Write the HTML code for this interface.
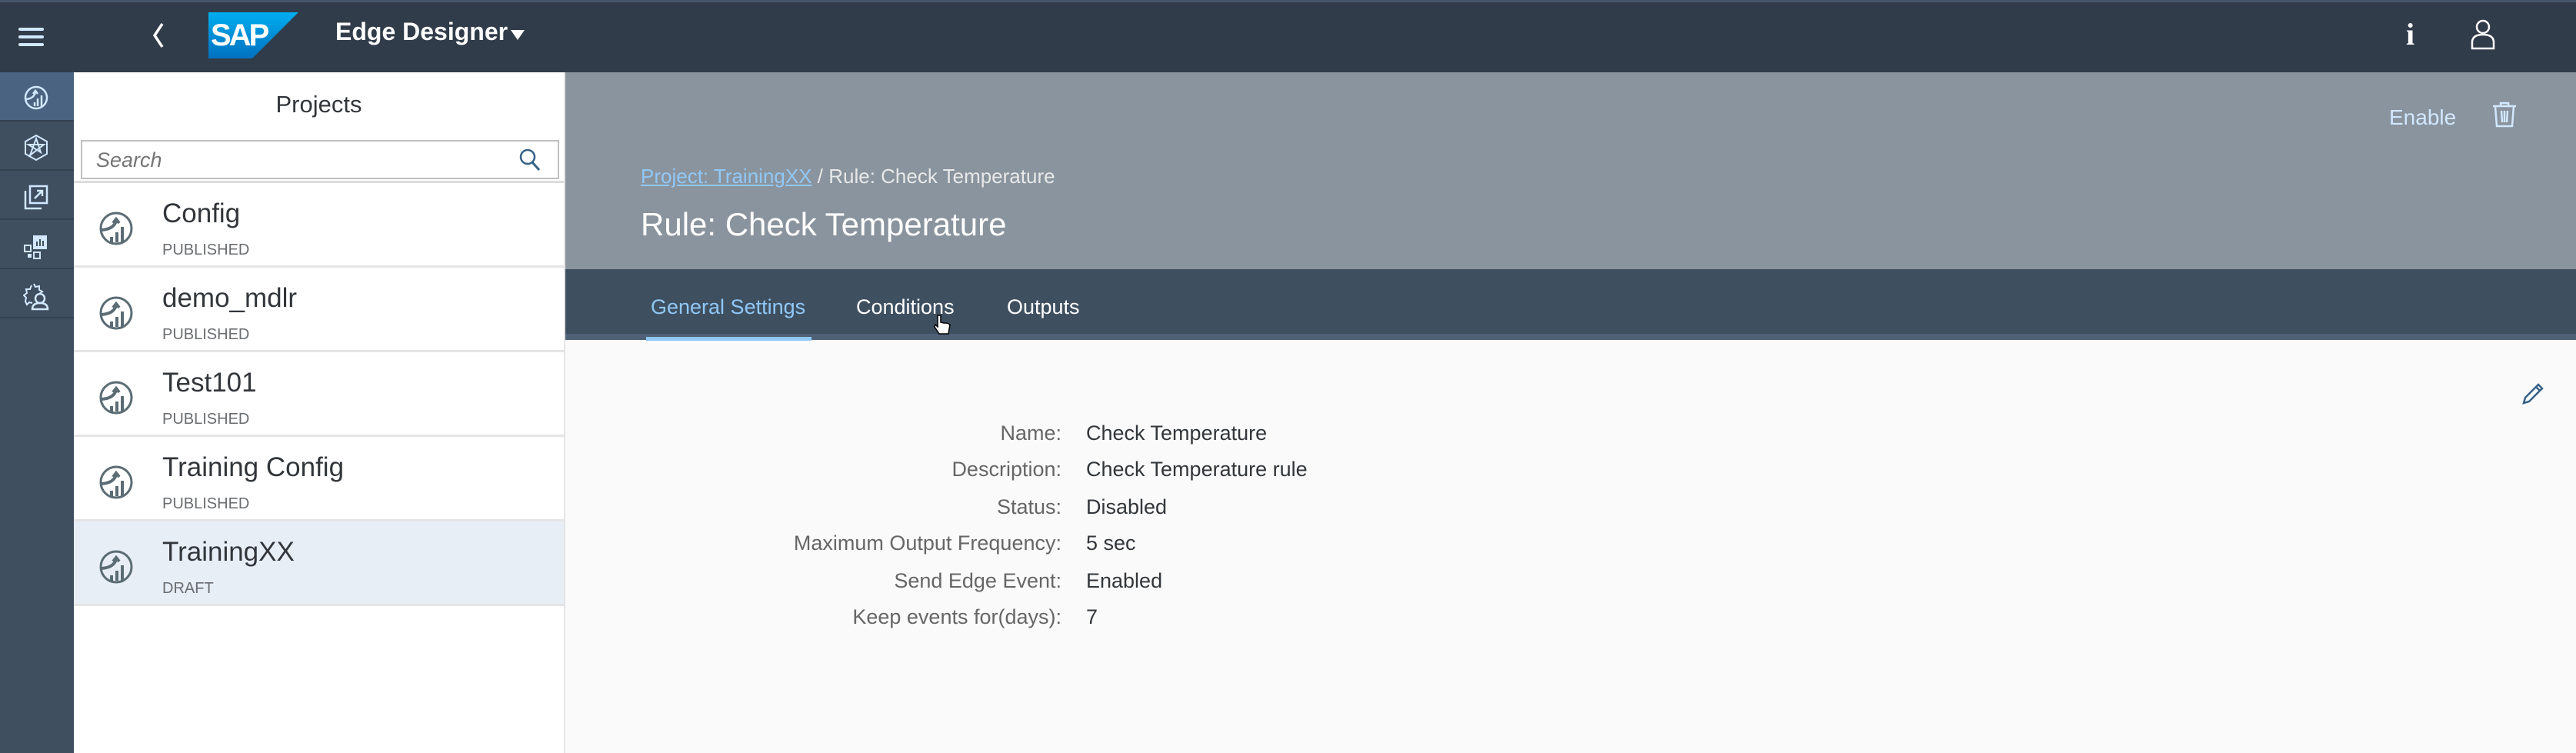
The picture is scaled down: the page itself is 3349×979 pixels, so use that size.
<!DOCTYPE html>
<html><head><meta charset="utf-8"><style>
*{margin:0;padding:0;box-sizing:border-box}
body{width:3349px;height:979px;overflow:hidden;font-family:"Liberation Sans",sans-serif;background:#fafafa;position:relative}
.abs{position:absolute}
#hdr{left:0;top:0;width:3349px;height:94px;background:#313c4a;border-top:3px solid #46566a}
#side{left:0;top:94px;width:96px;height:885px;background:#3f4f60}
.si{position:absolute;left:0;width:96px;height:64px;border-bottom:2px solid #34414f}
#panel{left:96px;top:94px;width:639px;height:885px;background:#fff;border-right:2px solid #e5e5e5}
.item{position:absolute;left:0;width:637px;height:110px;border-bottom:3px solid #e5e5e5}
.item .t{position:absolute;left:115px;top:20px;font-size:35px;color:#32363a}
.item .s{position:absolute;left:115px;top:76px;font-size:20px;color:#6a6d70}
.item svg{position:absolute;left:32px;top:36px}
#oh{left:735px;top:94px;width:2614px;height:256px;background:#8a949e}
#tabs{left:735px;top:350px;width:2614px;height:92px;background:#3e4f60;border-bottom:8px solid #4f6177}
.tab{position:absolute;top:34px;font-size:27px;color:#fff}
.lab{position:absolute;right:1969px;font-size:27px;color:#666;white-space:nowrap}
.val{position:absolute;left:1412px;font-size:27px;color:#32363a;white-space:nowrap}
</style></head><body>
<div id="hdr" class="abs">
 <div class="abs" style="left:24px;top:33px;width:33px;height:4px;background:#d1e8ff;box-shadow:0 10px 0 #d1e8ff,0 20px 0 #d1e8ff;border-radius:2px"></div>
 <svg class="abs" style="left:196px;top:25px" width="20" height="36"><path d="M15 3 L5 18 L15 33" stroke="#fff" stroke-width="3.5" fill="none"/></svg>
 <svg class="abs" style="left:271px;top:13px" width="120" height="60"><defs><linearGradient id="g" x1="0" y1="0" x2="0" y2="1"><stop offset="0" stop-color="#00aeef"/><stop offset="1" stop-color="#0070c0"/></linearGradient></defs><path d="M0 0 H117 L57 60 H0 Z" fill="url(#g)"/><text x="3" y="43" font-family="Liberation Sans" font-weight="bold" font-size="40" fill="#fff" letter-spacing="-3">SAP</text></svg>
 <div class="abs" style="left:436px;top:20px;font-size:32px;color:#fff;font-weight:bold">Edge Designer</div>
 <svg class="abs" style="left:664px;top:36px" width="18" height="14"><path d="M0 0 H18 L9 13 Z" fill="#fff"/></svg>
 <div class="abs" style="left:3128px;top:18px;font-family:'Liberation Serif',serif;font-size:40px;color:#fff;font-weight:bold">i</div>
 <svg class="abs" style="left:3212px;top:22px" width="32" height="40"><circle cx="16" cy="10" r="8" stroke="#fff" stroke-width="2.5" fill="none"/><path d="M2 38 V30 Q2 20 16 20 Q30 20 30 30 V38 Z" stroke="#fff" stroke-width="2.5" fill="none"/></svg>
</div>
<div id="side" class="abs">
 <div class="si" style="top:0;background:#4a6380"></div>
 <div class="si" style="top:64px"></div><div class="si" style="top:128px"></div><div class="si" style="top:192px"></div><div class="si" style="top:256px"></div>
 <svg class="abs" style="left:30px;top:16px" width="34" height="34"><circle cx="17" cy="17" r="14" stroke="#d1e8ff" stroke-width="2.5" fill="none"/><path d="M4 19 Q14 18 16 10 M13 12 L16 8 L19 12 M15 28 V23 M19 28 V18 M24 28 V14" stroke="#d1e8ff" stroke-width="2.5" fill="none"/></svg>
 <svg class="abs" style="left:30px;top:80px" width="34" height="36"><path d="M17 2 L31 10 V26 L17 34 L3 26 V10 Z M9 28 L17 6 L23 24 L7 14 H27 Z" stroke="#d1e8ff" stroke-width="2" fill="none"/></svg>
 <svg class="abs" style="left:30px;top:144px" width="34" height="36"><path d="M3 10 V33 H24 M9 4 H31 V26 H9 Z M15 20 L25 10 M18 10 H25 V17" stroke="#d1e8ff" stroke-width="2.5" fill="none"/></svg>
 <svg class="abs" style="left:30px;top:208px" width="34" height="36"><rect x="13" y="4" width="18" height="18" fill="#d1e8ff"/><path d="M18 18 V12 M22 18 V9 M26 18 V11" stroke="#3f4f60" stroke-width="2"/><rect x="2" y="17" width="8" height="8" stroke="#d1e8ff" stroke-width="2" fill="none"/><rect x="6" y="28" width="5" height="5" fill="#d1e8ff"/><rect x="14" y="26" width="8" height="8" stroke="#d1e8ff" stroke-width="2" fill="none"/></svg>
 <svg class="abs" style="left:30px;top:272px" width="36" height="38"><path d="M14 3 L16 7 L21 6 L21 11 L25 13 L21 16 M12 28 L8 27 L5 30 L3 26 L4 21 L1 18 L5 15 L4 10 L9 10 L11 5" stroke="#d1e8ff" stroke-width="2" fill="none"/><circle cx="22" cy="22" r="6" stroke="#d1e8ff" stroke-width="2.5" fill="none"/><path d="M12 36 Q12 28 22 28 Q32 28 32 36 Z" stroke="#d1e8ff" stroke-width="2.5" fill="none"/></svg>
</div>
<div id="panel" class="abs">
 <div class="abs" style="left:0;width:637px;top:24px;text-align:center;font-size:31px;color:#32363a">Projects</div>
 <div class="abs" style="left:9px;top:88px;width:622px;height:51px;border:2px solid #bfbfbf;background:#fff">
  <div class="abs" style="left:18px;top:9px;font-size:27px;font-style:italic;color:#757575">Search</div>
  <svg class="abs" style="left:567px;top:8px" width="30" height="32"><circle cx="12" cy="12" r="9" stroke="#346187" stroke-width="2.5" fill="none"/><path d="M18 19 L27 29" stroke="#346187" stroke-width="3"/></svg>
 </div>
 <div class="abs" style="left:0;top:141px;width:637px;height:3px;background:#dcdcdc"></div>
 <div class="item" style="top:144px"><svg width="46" height="46"><circle cx="23" cy="23" r="20" stroke="#5b6c74" stroke-width="3" fill="none"/><path d="M4 25 Q20 24 23 13 M19 16 L23 11 L27 16 M17 41 V34 M24 41 V28 M31 41 V21" stroke="#5b6c74" stroke-width="4" fill="none"/></svg><div class="t">Config</div><div class="s">PUBLISHED</div></div>
 <div class="item" style="top:254px"><svg width="46" height="46"><circle cx="23" cy="23" r="20" stroke="#5b6c74" stroke-width="3" fill="none"/><path d="M4 25 Q20 24 23 13 M19 16 L23 11 L27 16 M17 41 V34 M24 41 V28 M31 41 V21" stroke="#5b6c74" stroke-width="4" fill="none"/></svg><div class="t">demo_mdlr</div><div class="s">PUBLISHED</div></div>
 <div class="item" style="top:364px"><svg width="46" height="46"><circle cx="23" cy="23" r="20" stroke="#5b6c74" stroke-width="3" fill="none"/><path d="M4 25 Q20 24 23 13 M19 16 L23 11 L27 16 M17 41 V34 M24 41 V28 M31 41 V21" stroke="#5b6c74" stroke-width="4" fill="none"/></svg><div class="t">Test101</div><div class="s">PUBLISHED</div></div>
 <div class="item" style="top:474px"><svg width="46" height="46"><circle cx="23" cy="23" r="20" stroke="#5b6c74" stroke-width="3" fill="none"/><path d="M4 25 Q20 24 23 13 M19 16 L23 11 L27 16 M17 41 V34 M24 41 V28 M31 41 V21" stroke="#5b6c74" stroke-width="4" fill="none"/></svg><div class="t">Training Config</div><div class="s">PUBLISHED</div></div>
 <div class="item" style="top:584px;background:#e8eef6"><svg width="46" height="46"><circle cx="23" cy="23" r="20" stroke="#5b6c74" stroke-width="3" fill="none"/><path d="M4 25 Q20 24 23 13 M19 16 L23 11 L27 16 M17 41 V34 M24 41 V28 M31 41 V21" stroke="#5b6c74" stroke-width="4" fill="none"/></svg><div class="t">TrainingXX</div><div class="s">DRAFT</div></div>
</div>
<div id="oh" class="abs">
 <div class="abs" style="left:98px;top:120px;font-size:26px;color:#e8e8e8;white-space:nowrap"><span style="color:#91c8f6;text-decoration:underline">Project: TrainingXX</span> / Rule: Check Temperature</div>
 <div class="abs" style="left:98px;top:174px;font-size:42px;color:#fff;white-space:nowrap">Rule: Check Temperature</div>
 <div class="abs" style="left:2371px;top:43px;font-size:28px;color:#d1e8ff">Enable</div>
 <svg class="abs" style="left:2505px;top:38px" width="32" height="34"><path d="M1 6 H31 M11 6 V2 H21 V6 M4 6 L6 32 H26 L28 6 M12 12 L13 27 M16 12 V27 M20 12 L19 27" stroke="#d1e8ff" stroke-width="2.5" fill="none"/></svg>
</div>
<div id="tabs" class="abs">
 <div class="tab" style="left:111px;color:#91c8f6">General Settings</div>
 <div class="tab" style="left:378px">Conditions</div>
 <div class="tab" style="left:574px">Outputs</div>
 <div class="abs" style="left:105px;top:88px;width:215px;height:5px;background:#91c8f6"></div>
 <svg class="abs" style="left:478px;top:58px" width="24" height="30"><path d="M6 2 V17 L3 14 L2 17 L8 26 H20 L22 14 L18 12 L14 12 L10 11 V2 Z" fill="#fff" stroke="#000" stroke-width="1.5"/></svg>
</div>
<svg class="abs" style="left:3278px;top:497px" width="30" height="30"><path d="M3 27 L5 20 L22 3 L27 8 L10 25 Z M19 6 L24 11" stroke="#346187" stroke-width="2.5" fill="none"/></svg>
<div class="lab" style="top:548px">Name:</div><div class="val" style="top:548px">Check Temperature</div>
<div class="lab" style="top:595px">Description:</div><div class="val" style="top:595px">Check Temperature rule</div>
<div class="lab" style="top:644px">Status:</div><div class="val" style="top:644px">Disabled</div>
<div class="lab" style="top:691px">Maximum Output Frequency:</div><div class="val" style="top:691px">5 sec</div>
<div class="lab" style="top:740px">Send Edge Event:</div><div class="val" style="top:740px">Enabled</div>
<div class="lab" style="top:787px">Keep events for(days):</div><div class="val" style="top:787px">7</div>
</body></html>
